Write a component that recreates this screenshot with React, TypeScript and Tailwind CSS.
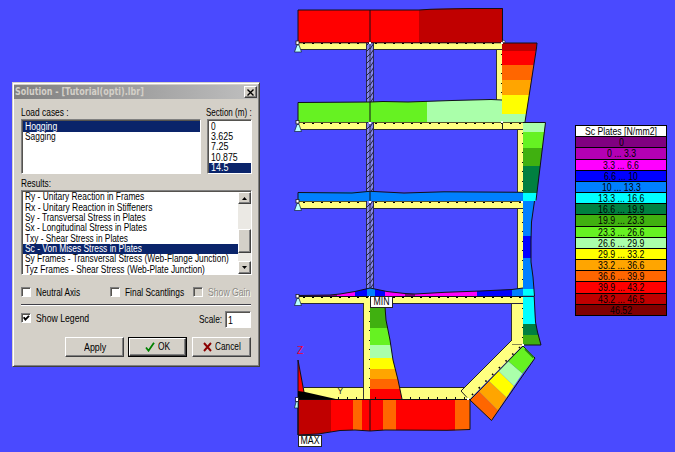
import React, { useLayoutEffect, useRef, useState } from "react";

/** Single line of text condensed or stretched to an exact width. */
function Fit({ w, children, className = "" }: { w: number; children: string; className?: string }) {
  const ref = useRef<HTMLSpanElement>(null);
  const [k, setK] = useState(1);
  useLayoutEffect(() => {
    if (ref.current) setK(w / ref.current.offsetWidth);
  }, [w]);
  return (
    <span className={`block shrink-0 whitespace-nowrap ${className}`} style={{ width: w }}>
      <span ref={ref} className="inline-block origin-left" style={{ transform: `scaleX(${k})` }}>
        {children}
      </span>
    </span>
  );
}

const sunken = "border border-t-[#808080] border-l-[#808080] border-r-white border-b-white bg-white shadow-[inset_1px_1px_0_#55534f]";
const raised = "border border-t-white border-l-white border-r-[#404040] border-b-[#404040] bg-[#d4d0c8] shadow-[inset_-1px_-1px_0_#808080]";

function Row({ text, w, selected }: { text: string; w: number; selected?: boolean }) {
  return (
    <div className={`flex h-[10.35px] items-center pl-[2px] text-[10px] ${selected ? "bg-[#0a246a] text-white" : ""}`}>
      <Fit w={w}>{text}</Fit>
    </div>
  );
}

function Check({ label, w, checked, disabled }: { label: string; w: number; checked?: boolean; disabled?: boolean }) {
  return (
    <div className="flex h-[10px] items-center gap-[5px]">
      <span className={`flex size-[10px] shrink-0 ${sunken} ${disabled ? "bg-[#d4d0c8]!" : ""}`}>
        {checked && (
          <svg className="size-[8px]" viewBox="0 0 8 8">
            <path d="M1.7 3.2L3.4 5.6L7 1.8" fill="none" stroke="#000" strokeWidth="1.9" />
          </svg>
        )}
      </span>
      <Fit w={w} className={disabled ? "text-[#8c8a84] [text-shadow:1px_1px_0_#fff]" : ""}>
        {label}
      </Fit>
    </div>
  );
}

const results: [string, number][] = [
  ["Ry - Unitary Reaction in Frames", 119],
  ["Rx - Unitary Reaction in Stiffeners", 127],
  ["Sy - Transversal Stress in Plates", 121],
  ["Sx - Longitudinal Stress in Plates", 122],
  ["Txy - Shear Stress in Plates", 103],
  ["Sc - Von Mises Stress in Plates", 117],
  ["Sy Frames - Transversal Stress (Web-Flange Junction)", 204],
  ["Tyz Frames - Shear Stress (Web-Plate Junction)", 180],
];

function Dialog() {
  return (
    <div className="mt-[82px] ml-[12px] flex h-[285px] w-[248px] shrink-0 flex-col border border-[#d4d0c8] border-r-[#404040] border-b-[#404040] bg-[#d4d0c8] px-[1px] pt-[2px] shadow-[inset_1px_1px_0_#fff,inset_-1px_-1px_0_#808080]">
      <div className="flex h-[14px] shrink-0 items-center justify-between bg-linear-to-r from-[#808080] to-[#c0c0c0] pr-[1px] pl-[1px]">
        <Fit w={129} className="font-['DejaVu_Sans',sans-serif] text-[10px] font-bold text-[#d4d0c8]">
          Solution - [Tutorial(opti).lbr]
        </Fit>
        <button className={`flex h-[12px] w-[13px] items-center justify-center ${raised}`}>
          <svg width="7" height="7" viewBox="0 0 7 7">
            <path d="M0.5 0.5L6.5 6.5M6.5 0.5L0.5 6.5" stroke="#000" strokeWidth="1.4" />
          </svg>
        </button>
      </div>

      <div className="flex flex-col pr-[6px] pl-[7px]">
        <div className="mt-[6px] flex h-[14px] gap-[6px]">
          <div className="flex w-[179px] items-center"><Fit w={48}>Load cases :</Fit></div>
          <div className="flex w-[46px] items-center"><Fit w={46}>Section (m) :</Fit></div>
        </div>
        <div className="flex h-[55px] gap-[6px]">
          <div className={`w-[180px] pt-[1.4px] pl-[1px] ${sunken}`}>
            <Row text="Hogging" w={32} selected />
            <Row text="Sagging" w={31} />
          </div>
          <div className={`w-[45px] pt-[1.4px] pl-[1px] ${sunken}`}>
            <Row text="0" w={5} />
            <Row text="3.625" w={22} />
            <Row text="7.25" w={17} />
            <Row text="10.875" w={27} />
            <Row text="14.5" w={17} selected />
          </div>
        </div>

        <div className="mt-[2px] flex h-[13px] items-center"><Fit w={30}>Results:</Fit></div>
        <div className={`mt-[1px] flex h-[85px] w-[231px] pt-[1px] pl-[1px] ${sunken}`}>
          <div className="min-w-0 flex-1">
            {results.map(([t, w], i) => (
              <Row key={t} text={t} w={w} selected={i === 5} />
            ))}
          </div>
          <div className="flex w-[13px] flex-col bg-[#ebe9e4]">
            <div className={`flex h-[12px] items-center justify-center ${raised}`}>
              <svg width="5" height="3"><path d="M0 3L2.5 0L5 3Z" /></svg>
            </div>
            <div className={`mt-[25px] h-[24px] ${raised}`} />
            <div className={`mt-auto flex h-[13px] items-center justify-center ${raised}`}>
              <svg width="5" height="3"><path d="M0 0L2.5 3L5 0Z" /></svg>
            </div>
          </div>
        </div>

        <div className="mt-[12px] flex">
          <div className="w-[89px]"><Check label="Neutral Axis" w={44} /></div>
          <div className="w-[83px]"><Check label="Final Scantlings" w={59} /></div>
          <Check label="Show Gain" w={42} disabled />
        </div>
        <div className="mt-[7px] h-[2px] w-[230px] border-b border-white bg-[#404048]" />

        <div className="mt-[5px] flex h-[17px]">
          <div className="mt-[2px] w-[178px]"><Check label="Show Legend" w={53} checked /></div>
          <div className="mt-[3px]"><Fit w={23}>Scale:</Fit></div>
          <div className={`ml-[3px] flex w-[26px] items-center pl-[2px] ${sunken}`}><Fit w={5}>1</Fit></div>
        </div>

        <div className="mt-[9px] flex h-[20px] pl-[44px]">
          <button className={`flex w-[59px] items-center justify-center ${raised}`}><Fit w={22}>Apply</Fit></button>
          <button className="ml-[4px] flex w-[59px] border border-black">
            <span className={`flex h-full w-full items-center justify-center gap-[3px] pb-[2px] ${raised}`}>
              <svg width="10" height="10" viewBox="0 0 10 10" className="mt-[2px]">
                <path d="M1 5.5L3.5 8.7L9 0.8" fill="none" stroke="#008000" strokeWidth="1.8" />
              </svg>
              <Fit w={12}>OK</Fit>
            </span>
          </button>
          <button className={`ml-[5px] flex w-[59px] items-center justify-center gap-[3px] pb-[2px] ${raised}`}>
            <svg width="9" height="10" viewBox="0 0 9 10" className="mt-[2px]">
              <path d="M1 1L8 9M8 1L1 9" stroke="#8b0000" strokeWidth="1.9" />
            </svg>
            <Fit w={26}>Cancel</Fit>
          </button>
        </div>
      </div>
    </div>
  );
}

const C = {
  purple: "#800080", magenta: "#ff00ff", blue: "#0000ff", azure: "#0080ff", cyan: "#00ffff",
  sea: "#008040", moss: "#40b010", green: "#66f222", mint: "#aaffaa", yellow: "#ffff00",
  amber: "#ffa500", orange: "#ff6600", red: "#ff0000", dark: "#c00000", plate: "#ffff80",
};

type Band = [number, string];

/** Stress shape filled with consecutive bands; each band is [start, colour]. */
function Stress({ id, points, bands, end, vertical }: { id: string; points: string; bands: Band[]; end: number; vertical?: boolean }) {
  return (
    <g>
      <clipPath id={id}><polygon points={points} /></clipPath>
      <g clipPath={`url(#${id})`}>
        {bands.map(([s, c], i) => {
          const e = i + 1 < bands.length ? bands[i + 1][0] : end;
          return vertical
            ? <rect key={i} x="285" width="270" y={s} height={e - s} fill={c} />
            : <rect key={i} y="0" height="452" x={s} width={e - s} fill={c} />;
        })}
      </g>
    </g>
  );
}

function Deck({ y, right }: { y: number; right: number }) {
  return (
    <g>
      <rect x="299" y={y} width={right - 299} height="7" fill={C.plate} />
      <path d={`M299 ${y + 7}H${right}`} stroke="#26263a" />
      <path d={`M298 ${y + 0.5}H${right}`} stroke="#55552a" />
      <path d={`M302.5 ${y + 1.3}H${right}`} stroke="#000" strokeDasharray="2 7" />
    </g>
  );
}

function Support({ y }: { y: number }) {
  return (
    <g shapeRendering="auto">
      <path d={`M297 ${y + 2}h2l2.5 7h-7z`} fill="#b8ffff" stroke="#102030" strokeWidth=".7" />
      <rect x="296" y={y - 2} width="3" height="3.4" fill="#fff" stroke="#222" strokeWidth=".8" />
    </g>
  );
}

function Tag({ x, y, w, text, tw }: { x: number; y: number; w: number; text: string; tw: number }) {
  return (
    <g>
      <rect x={x + 0.5} y={y + 0.5} width={w} height="11" fill="#fff" stroke="#222" />
      <text x={x + (w - tw) / 2 + 0.5} y={y + 9.4} fontSize="10" textLength={tw} lengthAdjust="spacingAndGlyphs">{text}</text>
    </g>
  );
}

const outline = { fill: "none", stroke: "#101018", strokeWidth: 1, shapeRendering: "auto" as const };

function Diagram() {
  return (
    <svg className="ml-[25px] h-[452px] w-[270px] shrink-0" viewBox="285 0 270 452" shapeRendering="crispEdges">
      <defs>
        <clipPath id="pillar"><rect x="366" y="43" width="8" height="253" /></clipPath>
      </defs>
      <rect x="496" y="49" width="6" height="51" fill={C.plate} />
      <path d="M496.5 49V99.5" stroke="#333" />
      <rect x="517" y="128" width="6" height="168" fill={C.plate} />
      <path d="M517 128V290" stroke="#333" />
      <rect x="511" y="302" width="12" height="43" fill={C.plate} stroke="#333" />
      <rect x="304" y="388" width="166" height="11" fill={C.plate} />
      <path d="M304 387.5H464" stroke="#222" />
      <rect x="364" y="302" width="6" height="97" fill={C.plate} />
      <path d="M363.5 302V399" stroke="#333" />

      <Deck y={42} right={502} />
      <Deck y={122} right={523} />
      <Deck y={201} right={523} />
      <Deck y={296} right={523} />
      <rect x="364" y="302" width="6" height="4" fill={C.plate} />

      <g clipPath="url(#pillar)" shapeRendering="auto">
        <rect x="366" y="43" width="8" height="253" fill="#8585ed" />
        {Array.from({ length: 44 }, (_, i) => (
          <path key={i} d={`M366 ${46 + i * 6}L370 ${42 + i * 6}M370 ${49 + i * 6}L374 ${43 + i * 6}`} stroke="#17172f" strokeWidth=".9" />
        ))}
        <path d="M366.5 43V296M370 43V296M373.5 43V296" stroke="#22223c" strokeWidth=".9" />
      </g>

      <Stress id="d1" points="298,10 419,10 430,9 470,8 503,8 503,43 298,43" bands={[[298, C.red], [419, C.dark]]} end={503} />
      <path {...outline} d="M298 43V10H419L430 9.3L470 8.5H502.5V43M298 42.8H502" />
      <Stress id="d2" points="298,102.5 370,102 383,101.5 408,102 452,100.5 491,99.5 502,100 502,122 298,122" bands={[[298, C.green], [427, C.mint]]} end={502} />
      <path {...outline} d="M298 122V102.5L370 102L383 101.5L408 102L452 100.5L491 99.5L502 100" />
      <Stress id="d3" points="298,192.5 370,191.5 404,193.5 444,191.5 523,192 523,201 298,201" bands={[[298, C.azure]]} end={523} />
      <path {...outline} d="M298 201V192.5L352 193L370 191.3L404 193L444 191.8L523 192.3" />
      <Stress id="d4" points="298,295.3 330,295 340,294 355,291.5 370,288 387,291.5 405,293.5 415,294 445,292.3 480,291 512,289.5 523,288 523,296 298,296" bands={[[298, C.purple], [337, C.magenta], [355, C.blue], [367, C.azure], [375, C.blue], [385, C.magenta], [405, C.purple], [415, C.magenta], [477, C.blue], [512, C.azure]]} end={523} />
      <path {...outline} d="M298 295.5L330 295L340 294L355 291.5L370 288L387 291.5L405 293.5L415 294L445 292.3L480 291L512 289.5L523 288M298 296.5H523" />
      <path {...outline} d="M370 10V43M370 102V122M370 192V201" />

      <Stress id="s1" vertical points="502,43 537,43 525,122 502,122" bands={[[43, C.dark], [51, C.red], [65, C.orange], [80, C.amber], [95, C.yellow], [114, C.mint]]} end={122} />
      <path {...outline} d="M502 43H537L536.5 48L525 122" />
      <Stress id="s2" vertical points="523,122 545.5,122 536,201 523,201" bands={[[122, C.mint], [132, C.green], [148, C.moss], [166, C.sea], [193, C.cyan]]} end={201} />
      <path {...outline} d="M523 122.5H545.5L536 200.5" />
      <Stress id="s3" vertical points="523,201 534.5,201 531.5,222 531,240 531,262 533,277 534.5,296 523,296" bands={[[201, C.azure], [236, C.blue], [258, C.azure], [289, C.cyan]]} end={296} />
      <path {...outline} d="M534.5 201L531.5 222L531 240V262L533 277L534.5 296.3H523" />
      <Stress id="s4" vertical points="523,297 534,297 535,320 537,330 541,345 523,345" bands={[[297, C.cyan], [324, C.sea], [335, C.moss]]} end={345} />
      <path {...outline} d="M534.2 297L535.5 322L537.5 332L541 345H512" />
      <Stress id="s5" vertical points="370,297 385,297 386,320 390,340 393,360 398,380 402,399 370,399" bands={[[297, C.moss], [328, C.green], [345, C.mint], [358, C.yellow], [369, C.amber], [379, C.orange], [389, C.red]]} end={399} />
      <path {...outline} d="M385 307L386 320L390 340L393 360L398 380L402 399" />

      <Stress id="b" points="298,399 470,399 470,430 447,430.5 385,430 370,431 355,430 340,430.5 318,434 298,435" bands={[[298, C.dark], [331, C.red], [353, C.orange], [362, C.red], [383, C.orange], [396, C.red], [455, C.orange]]} end={470} />
      <path {...outline} d="M298 399.5H470V429.5L447 430.3L385 430L370 431L355 430L340 430.5L318 434L298 435ZM370 399V431" />

      <path d="M298 360L304 392L298 392Z" fill={C.red} />
      <path {...outline} d="M298 435V360L304 392" />
      <path d="M298 391L305 392L338 399.5H298Z" fill="#000" shapeRendering="auto" />

      <g shapeRendering="auto">
        <path d="M461 391L512 340V345H523L470 399H467Z" fill={C.plate} />
        <path d="M512 340L461 391L467 397.5" fill="none" stroke="#222" />
        <path d="M470 400L479 391.5L498 410.5L491.5 420.5Z" fill={C.orange} />
        <path d="M479 391.5L489 381L506.5 397.5L498 410.5Z" fill={C.amber} />
        <path d="M489 381L498.5 371L514 386L506.5 397.5Z" fill={C.yellow} />
        <path d="M498.5 371L508 361L522.5 373.5L514 386Z" fill={C.mint} />
        <path d="M508 361L523 346L535 358L522.5 373.5Z" fill={C.green} />
        <path d="M470 400L523 346L535 358L491.5 420.5Z" fill="none" stroke="#111" />
        <path d="M525 349L533.5 357.5" stroke="#278018" strokeWidth="1.8" />
        <path d="M472 395L520 347" stroke="#000" strokeWidth="1.7" strokeDasharray="1.5 8" />
      </g>
      <path d="M338 398H363M375 398H376M410 398.3H466" stroke="#111" strokeWidth="2" strokeDasharray="1 8" />
      <path d="M522 133V192M522 212V286M522 308V340M501.5 54V98M369.5 311V396" stroke="#111" strokeWidth="1" strokeDasharray="1 8.5" />
      <path d="M502 122V129" stroke="#222" />

      <Support y={43} />
      <Support y={122.5} />
      <Support y={201.5} />
      <Support y={296.5} />
      <path d="M296 402L294.5 408H298V401Z" fill="#b8ffff" stroke="#102030" strokeWidth=".7" shapeRendering="auto" />
      <rect x="295.5" y="397.5" width="2.5" height="3.5" fill="#fff" stroke="#222" strokeWidth=".7" />
      {[[370, 43], [370, 122.5], [370, 201.5], [370, 296.5], [502, 43], [502, 122], [522, 201.5], [523, 345], [468, 399]].map(([x, y]) => (
        <rect key={`${x}-${y}`} x={x - 1} y={y - 1} width="2" height="2" fill="#fff" />
      ))}
      <circle cx="503.8" cy="41.5" r="1.2" fill="#fff" stroke="#222" strokeWidth=".7" shapeRendering="auto" />

      <Tag x={370} y={296} w={22} text="MIN" tw={16} />
      <Tag x={298} y={435} w={23} text="MAX" tw={19} />
      <text x="297" y="354" fontSize="10" fill="#f00030" textLength="6.5" lengthAdjust="spacingAndGlyphs">Z</text>
      <text x="337.5" y="394" fontSize="9" fill="#222" textLength="5.5" lengthAdjust="spacingAndGlyphs">Y</text>
    </svg>
  );
}

const legend: [string, number, string][] = [
  ["Sc Plates [N/mm2]", 72, "bg-white"],
  ["0", 5, "bg-[#800080]"],
  ["0 ... 3.3", 29, "bg-[#b400b4]"],
  ["3.3 ... 6.6", 36, "bg-[#ff00ff]"],
  ["6.6 ... 10", 34, "bg-[#0000ff]"],
  ["10 ... 13.3", 39, "bg-[#0080ff]"],
  ["13.3 ... 16.6", 46, "bg-[#00ffff]"],
  ["16.6 ... 19.9", 46, "bg-[#008040]"],
  ["19.9 ... 23.3", 46, "bg-[#40b010]"],
  ["23.3 ... 26.6", 46, "bg-[#66f222]"],
  ["26.6 ... 29.9", 46, "bg-[#aaffaa]"],
  ["29.9 ... 33.2", 46, "bg-[#ffff00]"],
  ["33.2 ... 36.6", 46, "bg-[#ffa500]"],
  ["36.6 ... 39.9", 46, "bg-[#ff6600]"],
  ["39.9 ... 43.2", 46, "bg-[#ff0000]"],
  ["43.2 ... 46.5", 46, "bg-[#c00000]"],
  ["46.52", 22, "bg-[#800000]"],
];

function Legend() {
  return (
    <div className="mt-[125px] ml-[20px] flex h-[191px] w-[92px] shrink-0 flex-col border border-b-0 border-black">
      {legend.map(([t, w, bg]) => (
        <div key={t} className={`flex min-h-0 flex-1 items-center justify-center border-b border-black ${bg}`}>
          <Fit w={w}>{t}</Fit>
        </div>
      ))}
    </div>
  );
}

export default function App() {
  return (
    <main className="flex h-[452px] w-[675px] items-start overflow-hidden bg-[#4a4aff] font-['Liberation_Sans',Arial,sans-serif] text-[10.5px] leading-[10px] text-black">
      <Dialog />
      <Diagram />
      <Legend />
    </main>
  );
}
